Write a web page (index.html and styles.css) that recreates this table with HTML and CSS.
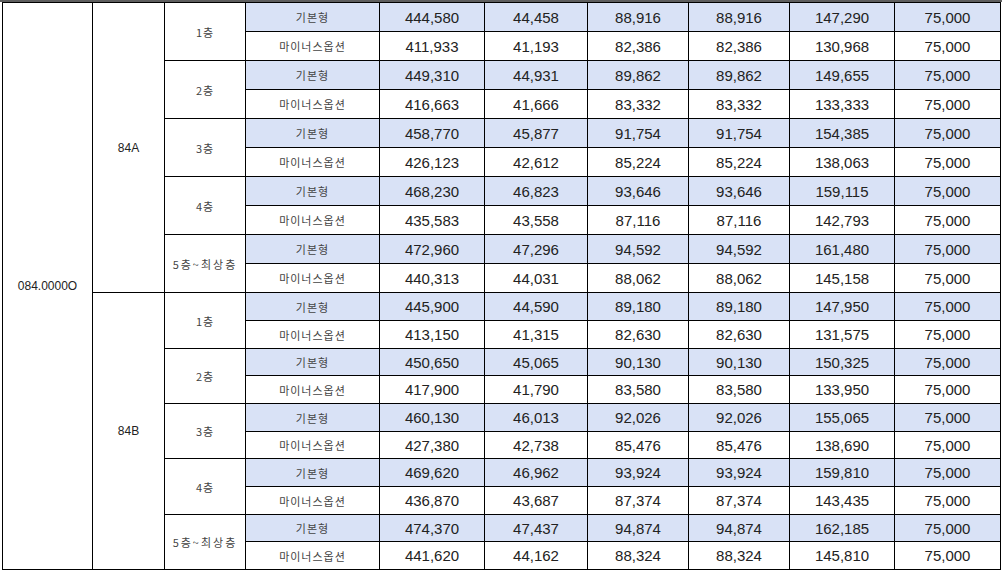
FILE: index.html
```html
<!DOCTYPE html>
<html lang="ko">
<head>
<meta charset="utf-8">
<title>분양가 표</title>
<link rel="stylesheet" href="styles.css">
</head>
<body>
<div class="topbar"></div>
<table class="price">
  <colgroup>
    <col class="c-code"><col class="c-type"><col class="c-floor"><col class="c-opt">
    <col class="c-n1"><col class="c-n2"><col class="c-n3"><col class="c-n4"><col class="c-n5"><col class="c-n6">
  </colgroup>
  <tbody>
    <tr class="ra basic"><td class="code" rowspan="20">084.0000O</td><td class="type" rowspan="10">84A</td><td class="floor" rowspan="2">1층</td><td class="opt">기본형</td><td>444,580</td><td>44,458</td><td>88,916</td><td>88,916</td><td>147,290</td><td>75,000</td></tr>
    <tr class="ra"><td class="opt">마이너스옵션</td><td>411,933</td><td>41,193</td><td>82,386</td><td>82,386</td><td>130,968</td><td>75,000</td></tr>
    <tr class="ra basic"><td class="floor" rowspan="2">2층</td><td class="opt">기본형</td><td>449,310</td><td>44,931</td><td>89,862</td><td>89,862</td><td>149,655</td><td>75,000</td></tr>
    <tr class="ra"><td class="opt">마이너스옵션</td><td>416,663</td><td>41,666</td><td>83,332</td><td>83,332</td><td>133,333</td><td>75,000</td></tr>
    <tr class="ra basic"><td class="floor" rowspan="2">3층</td><td class="opt">기본형</td><td>458,770</td><td>45,877</td><td>91,754</td><td>91,754</td><td>154,385</td><td>75,000</td></tr>
    <tr class="ra"><td class="opt">마이너스옵션</td><td>426,123</td><td>42,612</td><td>85,224</td><td>85,224</td><td>138,063</td><td>75,000</td></tr>
    <tr class="ra basic"><td class="floor" rowspan="2">4층</td><td class="opt">기본형</td><td>468,230</td><td>46,823</td><td>93,646</td><td>93,646</td><td>159,115</td><td>75,000</td></tr>
    <tr class="ra"><td class="opt">마이너스옵션</td><td>435,583</td><td>43,558</td><td>87,116</td><td>87,116</td><td>142,793</td><td>75,000</td></tr>
    <tr class="ra basic"><td class="floor wide" rowspan="2">5층~최상층</td><td class="opt">기본형</td><td>472,960</td><td>47,296</td><td>94,592</td><td>94,592</td><td>161,480</td><td>75,000</td></tr>
    <tr class="ra"><td class="opt">마이너스옵션</td><td>440,313</td><td>44,031</td><td>88,062</td><td>88,062</td><td>145,158</td><td>75,000</td></tr>

    <tr class="rb basic"><td class="type" rowspan="10">84B</td><td class="floor" rowspan="2">1층</td><td class="opt">기본형</td><td>445,900</td><td>44,590</td><td>89,180</td><td>89,180</td><td>147,950</td><td>75,000</td></tr>
    <tr class="rb"><td class="opt">마이너스옵션</td><td>413,150</td><td>41,315</td><td>82,630</td><td>82,630</td><td>131,575</td><td>75,000</td></tr>
    <tr class="rb short basic"><td class="floor" rowspan="2">2층</td><td class="opt">기본형</td><td>450,650</td><td>45,065</td><td>90,130</td><td>90,130</td><td>150,325</td><td>75,000</td></tr>
    <tr class="rb"><td class="opt">마이너스옵션</td><td>417,900</td><td>41,790</td><td>83,580</td><td>83,580</td><td>133,950</td><td>75,000</td></tr>
    <tr class="rb basic"><td class="floor" rowspan="2">3층</td><td class="opt">기본형</td><td>460,130</td><td>46,013</td><td>92,026</td><td>92,026</td><td>155,065</td><td>75,000</td></tr>
    <tr class="rb short"><td class="opt">마이너스옵션</td><td>427,380</td><td>42,738</td><td>85,476</td><td>85,476</td><td>138,690</td><td>75,000</td></tr>
    <tr class="rb basic"><td class="floor" rowspan="2">4층</td><td class="opt">기본형</td><td>469,620</td><td>46,962</td><td>93,924</td><td>93,924</td><td>159,810</td><td>75,000</td></tr>
    <tr class="rb"><td class="opt">마이너스옵션</td><td>436,870</td><td>43,687</td><td>87,374</td><td>87,374</td><td>143,435</td><td>75,000</td></tr>
    <tr class="rb short basic"><td class="floor wide" rowspan="2">5층~최상층</td><td class="opt">기본형</td><td>474,370</td><td>47,437</td><td>94,874</td><td>94,874</td><td>162,185</td><td>75,000</td></tr>
    <tr class="rb"><td class="opt">마이너스옵션</td><td>441,620</td><td>44,162</td><td>88,324</td><td>88,324</td><td>145,810</td><td>75,000</td></tr>
  </tbody>
</table>
</body>
</html>
```
FILE: styles.css
```css
html, body {
  margin: 0;
  padding: 0;
  background: #ffffff;
}

body {
  width: 1002px;
  height: 572px;
  overflow: hidden;
  font-family: "Liberation Sans", Arial, sans-serif;
  color: #222222;
}

.topbar {
  height: 2px;
  background: #5e5e5e;
}

.price {
  margin-left: 2px;
  border-collapse: collapse;
  table-layout: fixed;
  width: 999px;
}

.c-code { width: 90px; }
.c-type { width: 72px; }
.c-floor { width: 81px; }
.c-opt { width: 134px; }
.c-n1 { width: 105px; }
.c-n2 { width: 103px; }
.c-n3 { width: 101px; }
.c-n4 { width: 101px; }
.c-n5 { width: 105px; }
.c-n6 { width: 106px; }

.price td {
  border: 1px solid #000000;
  padding: 0;
  text-align: center;
  vertical-align: middle;
  font-size: 15px;
  white-space: nowrap;
  background: #ffffff;
}

.ra { height: 29px; }
.rb { height: 28px; }
.rb.short { height: 27px; }

.price tr.basic td {
  background: #d9e2f6;
}

.price tr.basic td.floor,
.price tr.basic td.type,
.price tr.basic td.code {
  background: #ffffff;
}

.price td.code {
  font-size: 12px;
}

.price td.type {
  font-size: 12px;
}

.price td.floor,
.price td.opt {
  font-family: "Noto Sans CJK KR", "Liberation Sans", sans-serif;
  font-size: 11px;
  letter-spacing: 1px;
  color: #444444;
}

.price td.floor.wide {
  letter-spacing: 2px;
}
```
